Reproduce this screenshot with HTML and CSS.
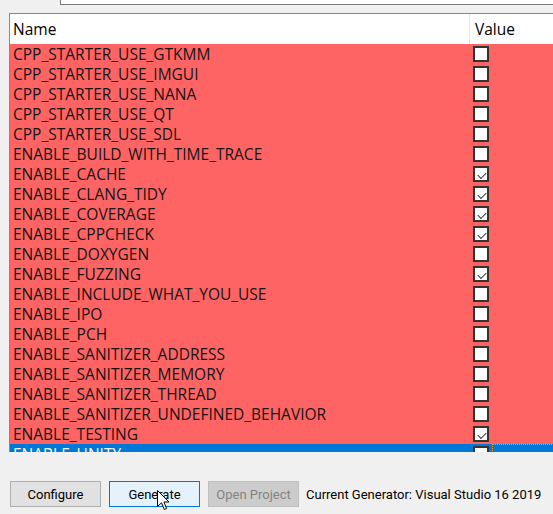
FILE: index.html
```html
<!DOCTYPE html>
<html lang="en">
<head>
  <meta charset="UTF-8">
  <title>CMake</title>
  <link rel="stylesheet" href="styles.css">
</head>
<body>

<div class="topbox"></div>

<div class="cache">
  <div class="head">
    <div class="col-name">Name</div>
    <div class="col-value">Value</div>
  </div>
  <div class="row"><div class="col-name">CPP_STARTER_USE_GTKMM</div><div class="col-value"><span class="box"></span></div></div>
  <div class="row"><div class="col-name">CPP_STARTER_USE_IMGUI</div><div class="col-value"><span class="box"></span></div></div>
  <div class="row"><div class="col-name">CPP_STARTER_USE_NANA</div><div class="col-value"><span class="box"></span></div></div>
  <div class="row"><div class="col-name">CPP_STARTER_USE_QT</div><div class="col-value"><span class="box"></span></div></div>
  <div class="row"><div class="col-name">CPP_STARTER_USE_SDL</div><div class="col-value"><span class="box"></span></div></div>
  <div class="row"><div class="col-name">ENABLE_BUILD_WITH_TIME_TRACE</div><div class="col-value"><span class="box"></span></div></div>
  <div class="row"><div class="col-name">ENABLE_CACHE</div><div class="col-value"><span class="box checked"></span></div></div>
  <div class="row"><div class="col-name">ENABLE_CLANG_TIDY</div><div class="col-value"><span class="box checked"></span></div></div>
  <div class="row"><div class="col-name">ENABLE_COVERAGE</div><div class="col-value"><span class="box checked"></span></div></div>
  <div class="row"><div class="col-name">ENABLE_CPPCHECK</div><div class="col-value"><span class="box checked"></span></div></div>
  <div class="row"><div class="col-name">ENABLE_DOXYGEN</div><div class="col-value"><span class="box"></span></div></div>
  <div class="row"><div class="col-name">ENABLE_FUZZING</div><div class="col-value"><span class="box checked"></span></div></div>
  <div class="row"><div class="col-name">ENABLE_INCLUDE_WHAT_YOU_USE</div><div class="col-value"><span class="box"></span></div></div>
  <div class="row"><div class="col-name">ENABLE_IPO</div><div class="col-value"><span class="box"></span></div></div>
  <div class="row"><div class="col-name">ENABLE_PCH</div><div class="col-value"><span class="box"></span></div></div>
  <div class="row"><div class="col-name">ENABLE_SANITIZER_ADDRESS</div><div class="col-value"><span class="box"></span></div></div>
  <div class="row"><div class="col-name">ENABLE_SANITIZER_MEMORY</div><div class="col-value"><span class="box"></span></div></div>
  <div class="row"><div class="col-name">ENABLE_SANITIZER_THREAD</div><div class="col-value"><span class="box"></span></div></div>
  <div class="row"><div class="col-name">ENABLE_SANITIZER_UNDEFINED_BEHAVIOR</div><div class="col-value"><span class="box"></span></div></div>
  <div class="row"><div class="col-name">ENABLE_TESTING</div><div class="col-value"><span class="box checked"></span></div></div>
  <div class="row selected"><div class="col-name">ENABLE_UNITY</div><div class="col-value"><span class="box"></span><span class="focus"></span></div></div>
</div>

<div class="actions">
  <button class="btn">Configure</button>
  <button class="btn hover">Generate</button>
  <button class="btn" disabled>Open Project</button>
  <span class="generator">Current Generator: Visual Studio 16 2019</span>

  <!-- mouse pointer over Generate -->
  <svg class="cursor" width="13" height="21" viewBox="0 0 13 21">
    <path d="M0.5 0.5 L0.5 16.5 L4.5 12.8 L7.3 19.5 L9.6 18.5 L6.9 12 L12 12 Z" fill="#fff" stroke="#000" stroke-width="1"/>
  </svg>
</div>

</body>
</html>
```

FILE: styles.css
```css
/* page */
body {
  margin: 0;
  background: #f0f0f0;
  font-family: 'Open Sans', 'Noto Sans', sans-serif;
  font-size: 15.5px;
  color: #000;
  overflow: hidden;
  width: 553px;
  height: 514px;
}

/* strip of the widget above */
.topbox {
  margin-left: 60px;
  height: 4px;
  background: #fff;
  border-left: 1px solid #7a7a7a;
  border-bottom: 1px solid #7a7a7a;
}

/* cache entries list */
.cache {
  margin: 8px 0 0 9px;
  width: 600px;
  height: 438px;
  border-top: 1px solid #828790;
  border-left: 1px solid #828790;
  background: #fff;
  overflow: hidden;
}

.head, .row {
  display: flex;
}

.col-name {
  width: 459px;
  flex: none;
  padding-left: 3px;
  box-sizing: border-box;
  white-space: nowrap;
}

.col-value {
  flex: 1;
}

.head {
  height: 30px;
  line-height: 31px;
  background: #fff;
}

.head .col-value {
  border-left: 1px solid #e5e5e5;
  padding-left: 5px;
}

.row {
  height: 20px;
  line-height: 20px;
  background: #ff6464;
  color: #141414;
}

.row .col-value {
  display: flex;
  padding-left: 4px;
  padding-top: 2px;
  box-sizing: border-box;
}

.row.selected {
  background: #0078d7;
  color: #fff;
}

.row .focus {
  flex: 1;
  height: 20px;
  margin: -2px 0 0 3px;
  border-top: 1px dotted #f0a030;
  border-left: 1px dotted #f0a030;
}

/* checkboxes */
.box {
  display: block;
  flex: none;
  width: 16px;
  height: 16px;
  box-sizing: border-box;
  border: 2px solid #333;
  background: #fff;
  position: relative;
}

.box.checked::after {
  content: "";
  position: absolute;
  left: 3px;
  top: 1px;
  width: 7px;
  height: 4px;
  border-left: 1.5px solid #333;
  border-bottom: 1.5px solid #333;
  transform: translate(0, 3px) rotate(-45deg);
}

/* bottom buttons */
.actions {
  display: flex;
  align-items: center;
  gap: 8px;
  margin: 29px 0 0 10px;
  position: relative;
  font-family: Roboto, 'Open Sans', sans-serif;
  font-size: 13px;
}

.btn {
  flex: none;
  width: 91px;
  height: 26px;
  padding: 0;
  background: #e1e1e1;
  border: 1px solid #adadad;
  font-family: inherit;
  font-size: inherit;
  color: #000;
  white-space: nowrap;
}

.btn.hover {
  background: #e5f1fb;
  border-color: #0078d7;
}

.btn:disabled {
  background: #cccccc;
  border-color: #bfbfbf;
  color: #838383;
}

.generator {
  margin-left: -1px;
  white-space: nowrap;
}

.cursor {
  position: absolute;
  left: 147px;
  top: 9px;
}
```
